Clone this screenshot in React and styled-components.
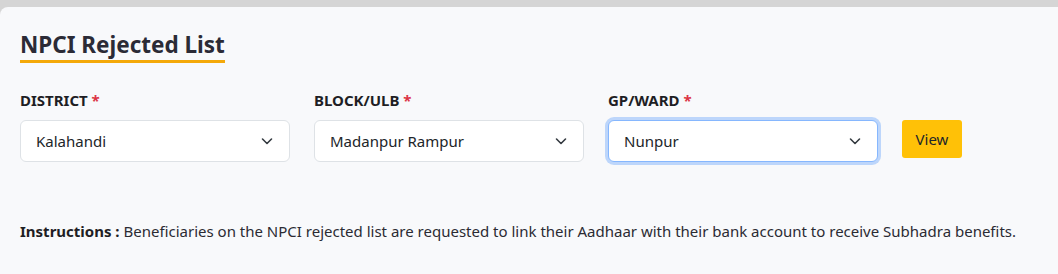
import React from 'react';
import styled, { createGlobalStyle, css } from 'styled-components';

const GlobalStyle = createGlobalStyle`
    body {
        margin: 0;
        background: #d5d5d5;
        font-family: "Noto Sans", "Open Sans", sans-serif;
        color: #212529;
    }
`

const fields = [
    { label: 'DISTRICT', value: 'Kalahandi' },
    { label: 'BLOCK/ULB', value: 'Madanpur Rampur' },
    { label: 'GP/WARD', value: 'Nunpur', focused: true },
]

const Chevron = () => (
    <svg width="16" height="16" viewBox="0 0 16 16" fill="none">
        <path d="M3.5 6l4.5 4.5L12.5 6" stroke="#343a40" strokeWidth="1.6" strokeLinecap="round" strokeLinejoin="round" />
    </svg>
)

const App = () => {
    return (<Page>
        <GlobalStyle />
        <Card>
            <Title>NPCI Rejected List</Title>

            <FormRow>
                {fields.map(f => (
                    <Field key={f.label}>
                        <Label>{f.label} <Required>*</Required></Label>
                        <SelectBox $focused={f.focused}>
                            <span>{f.value}</span>
                            <Chevron />
                        </SelectBox>
                    </Field>
                ))}
                <ViewBtn>View</ViewBtn>
            </FormRow>

            <Instructions>
                <strong>Instructions :</strong> Beneficiaries on the NPCI rejected list are requested to link their Aadhaar with their bank account to receive Subhadra benefits.
            </Instructions>
        </Card>
    </Page>
    )
}

const Page = styled.div`
    padding-top: 7px;
    height: 267px;
    overflow: hidden;
`

const Card = styled.div`
    background: #f8f9fb;
    border-top-left-radius: 8px;
    height: 100%;
    padding: 23px 20px 0 20px;
    box-sizing: border-box;
`

const Title = styled.h4`
    display: inline-block;
    margin: 0;
    font-size: 22.5px;
    font-weight: 700;
    color: #2b2b36;
    line-height: 29px;
    padding-bottom: 1px;
    border-bottom: 3px solid #f4a90a;
`

const FormRow = styled.div`
    display: flex;
    align-items: flex-end;
    gap: 24px;
    margin-top: 27px;
`

const Field = styled.div`
    width: 270px;
    display: flex;
    flex-direction: column;
`

const Label = styled.label`
    font-size: 15px;
    font-weight: 700;
    color: #1e1e24;
    line-height: 20px;
    margin-bottom: 10px;
`

const Required = styled.span`
    color: #dc3545;
`

const SelectBox = styled.div`
    height: 42px;
    box-sizing: border-box;
    background: #fff;
    border: 1px solid #dee2e6;
    border-radius: 6px;
    display: flex;
    align-items: center;
    justify-content: space-between;
    padding: 0 14px 0 15px;
    font-size: 15px;
    color: #212529;

    ${p => p.$focused && css`
        border-color: #86b7fe;
        box-shadow: 0 0 0 3px rgba(13, 110, 253, 0.25);
    `}
`

const ViewBtn = styled.button`
    height: 38px;
    width: 60px;
    margin-bottom: 4px;
    background: #ffc107;
    border: none;
    border-radius: 3px;
    font-family: inherit;
    font-size: 15px;
    color: #212529;
    padding: 0;
    cursor: pointer;
`

const Instructions = styled.p`
    margin: 59px 0 0 0;
    font-size: 15px;
    line-height: 20px;
    color: #2b2b33;

    strong {
        font-weight: 700;
        color: #1e1e24;
    }
`

export default App;
